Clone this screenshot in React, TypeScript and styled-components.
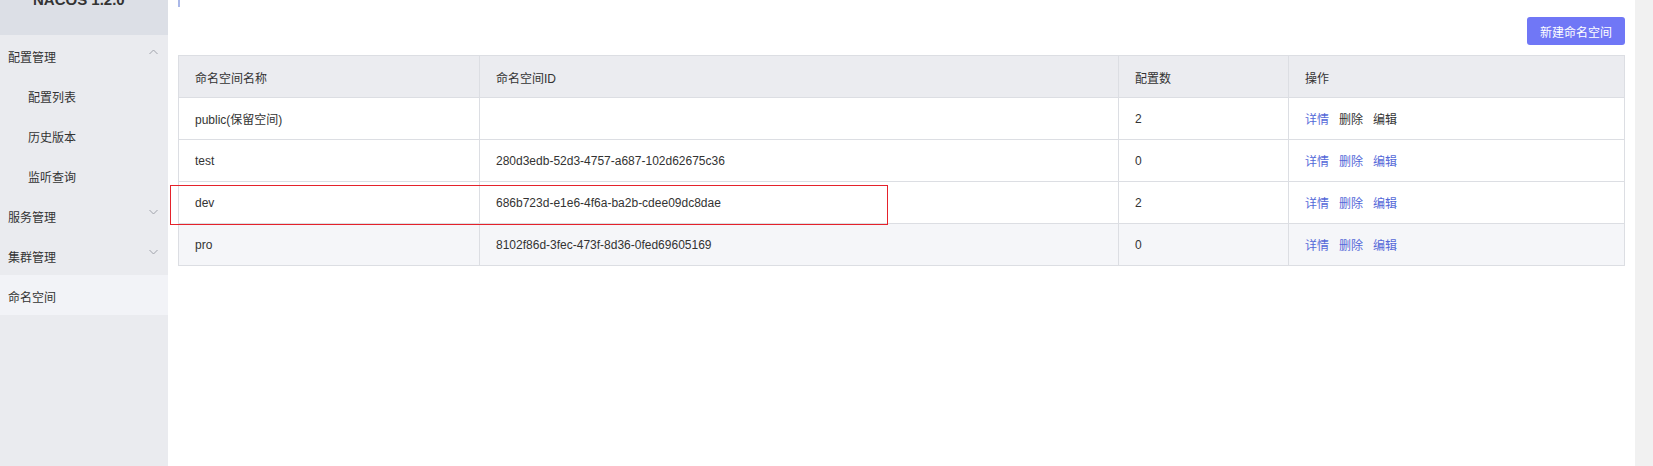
import React from "react";
import styled, { createGlobalStyle } from "styled-components";

const GlobalStyle = createGlobalStyle`
  html, body { margin: 0; padding: 0; background: #fff; }
  body { font-family: "Liberation Sans", "Noto Sans CJK SC", sans-serif; font-size: 12px; color: #333; }
  * { box-sizing: border-box; }
`;

const Page = styled.div`
  display: flex;
  height: 466px;
  overflow: hidden;
`;

const Sidebar = styled.aside`
  width: 168px;
  flex: none;
  background: #eaebef;
  display: flex;
  flex-direction: column;
`;

const SideHeader = styled.div`
  height: 35px;
  background: #dcdfe6;
  overflow: hidden;
  padding-left: 33px;
`;

const Brand = styled.div`
  margin-top: -10px;
  font-family: "Liberation Sans", sans-serif;
  font-weight: bold;
  font-size: 15px;
  line-height: 20px;
  color: #333;
`;

const MenuItem = styled.div<{ $sub?: boolean; $active?: boolean }>`
  height: 40px;
  display: flex;
  align-items: center;
  justify-content: space-between;
  padding-left: ${(p) => (p.$sub ? "28px" : "8px")};
  padding-right: 10px;
  background: ${(p) => (p.$active ? "#f2f3f7" : "transparent")};
  color: #333;
  font-size: 12px;
  span { padding-top: 2px; }
`;

const Chevron = ({ up }: { up?: boolean }) => (
  <svg width="9" height="6" viewBox="0 0 9 6" style={{ marginTop: -6 }}>
    <polyline
      points={up ? "0.5,5 4.5,1 8.5,5" : "0.5,1 4.5,5 8.5,1"}
      fill="none"
      stroke="#a0a3ab"
      strokeWidth="1"
    />
  </svg>
);

const Main = styled.main`
  flex: 1;
  padding: 0 10px;
  display: flex;
  flex-direction: column;
  background: #fff;
`;

const Crumb = styled.div`
  width: 2px;
  height: 7px;
  background: #aab8e8;
`;

const Toolbar = styled.div`
  display: flex;
  justify-content: flex-end;
  margin-top: 10px;
  margin-bottom: 10px;
`;

const PrimaryButton = styled.button`
  height: 28px;
  width: 98px;
  border: none;
  border-radius: 3px;
  background: #7077f6;
  color: #fff;
  font-family: "Liberation Sans", "Noto Sans CJK SC", sans-serif;
  font-size: 12px;
  padding: 0;
  cursor: pointer;
`;

const TableWrap = styled.div`
  position: relative;
`;

const Table = styled.table`
  width: 1446px;
  border-collapse: collapse;
  table-layout: fixed;
  border: 1px solid #dcdee3;
`;

const Th = styled.th`
  height: 42px;
  background: #ebecf0;
  border: 1px solid #dcdee3;
  text-align: left;
  font-weight: normal;
  padding: 2px 16px 0;
  color: #333;
`;

const Tr = styled.tr<{ $hover?: boolean }>`
  background: ${(p) => (p.$hover ? "#f5f6f9" : "#fff")};
`;

const Td = styled.td`
  height: 42px;
  border: 1px solid #dcdee3;
  padding: 0 16px;
  color: #333;
`;

const Actions = styled.div`
  display: flex;
  gap: 10px;
`;

const ActionLink = styled.a<{ $disabled?: boolean }>`
  color: ${(p) => (p.$disabled ? "#333" : "#5468d8")};
  text-decoration: none;
  cursor: pointer;
`;

const Highlight = styled.div`
  position: absolute;
  left: -8px;
  top: 130px;
  width: 718px;
  height: 40px;
  border: 1px solid #e5222b;
  pointer-events: none;
`;

const ScrollTrack = styled.div`
  width: 19px;
  flex: none;
  background: #f1f1f1;
`;

const rows = [
  { name: "public(保留空间)", id: "", count: "2", reserved: true },
  { name: "test", id: "280d3edb-52d3-4757-a687-102d62675c36", count: "0" },
  { name: "dev", id: "686b723d-e1e6-4f6a-ba2b-cdee09dc8dae", count: "2" },
  { name: "pro", id: "8102f86d-3fec-473f-8d36-0fed69605169", count: "0", hover: true },
];

export default function App() {
  return (
    <>
      <GlobalStyle />
      <Page>
        <Sidebar>
          <SideHeader>
            <Brand>NACOS 1.2.0</Brand>
          </SideHeader>
          <MenuItem>
            <span>配置管理</span>
            <Chevron up />
          </MenuItem>
          <MenuItem $sub>
            <span>配置列表</span>
          </MenuItem>
          <MenuItem $sub>
            <span>历史版本</span>
          </MenuItem>
          <MenuItem $sub>
            <span>监听查询</span>
          </MenuItem>
          <MenuItem>
            <span>服务管理</span>
            <Chevron />
          </MenuItem>
          <MenuItem>
            <span>集群管理</span>
            <Chevron />
          </MenuItem>
          <MenuItem $active>
            <span>命名空间</span>
          </MenuItem>
        </Sidebar>
        <Main>
          <Crumb />
          <Toolbar>
            <PrimaryButton>新建命名空间</PrimaryButton>
          </Toolbar>
          <TableWrap>
            <Table>
              <colgroup>
                <col style={{ width: 301 }} />
                <col style={{ width: 639 }} />
                <col style={{ width: 170 }} />
                <col style={{ width: 336 }} />
              </colgroup>
              <thead>
                <tr>
                  <Th>命名空间名称</Th>
                  <Th>命名空间ID</Th>
                  <Th>配置数</Th>
                  <Th>操作</Th>
                </tr>
              </thead>
              <tbody>
                {rows.map((r) => (
                  <Tr key={r.name} $hover={r.hover}>
                    <Td>{r.name}</Td>
                    <Td>{r.id}</Td>
                    <Td>{r.count}</Td>
                    <Td>
                      <Actions>
                        <ActionLink>详情</ActionLink>
                        <ActionLink $disabled={r.reserved}>删除</ActionLink>
                        <ActionLink $disabled={r.reserved}>编辑</ActionLink>
                      </Actions>
                    </Td>
                  </Tr>
                ))}
              </tbody>
            </Table>
            <Highlight />
          </TableWrap>
        </Main>
        <ScrollTrack />
      </Page>
    </>
  );
}
